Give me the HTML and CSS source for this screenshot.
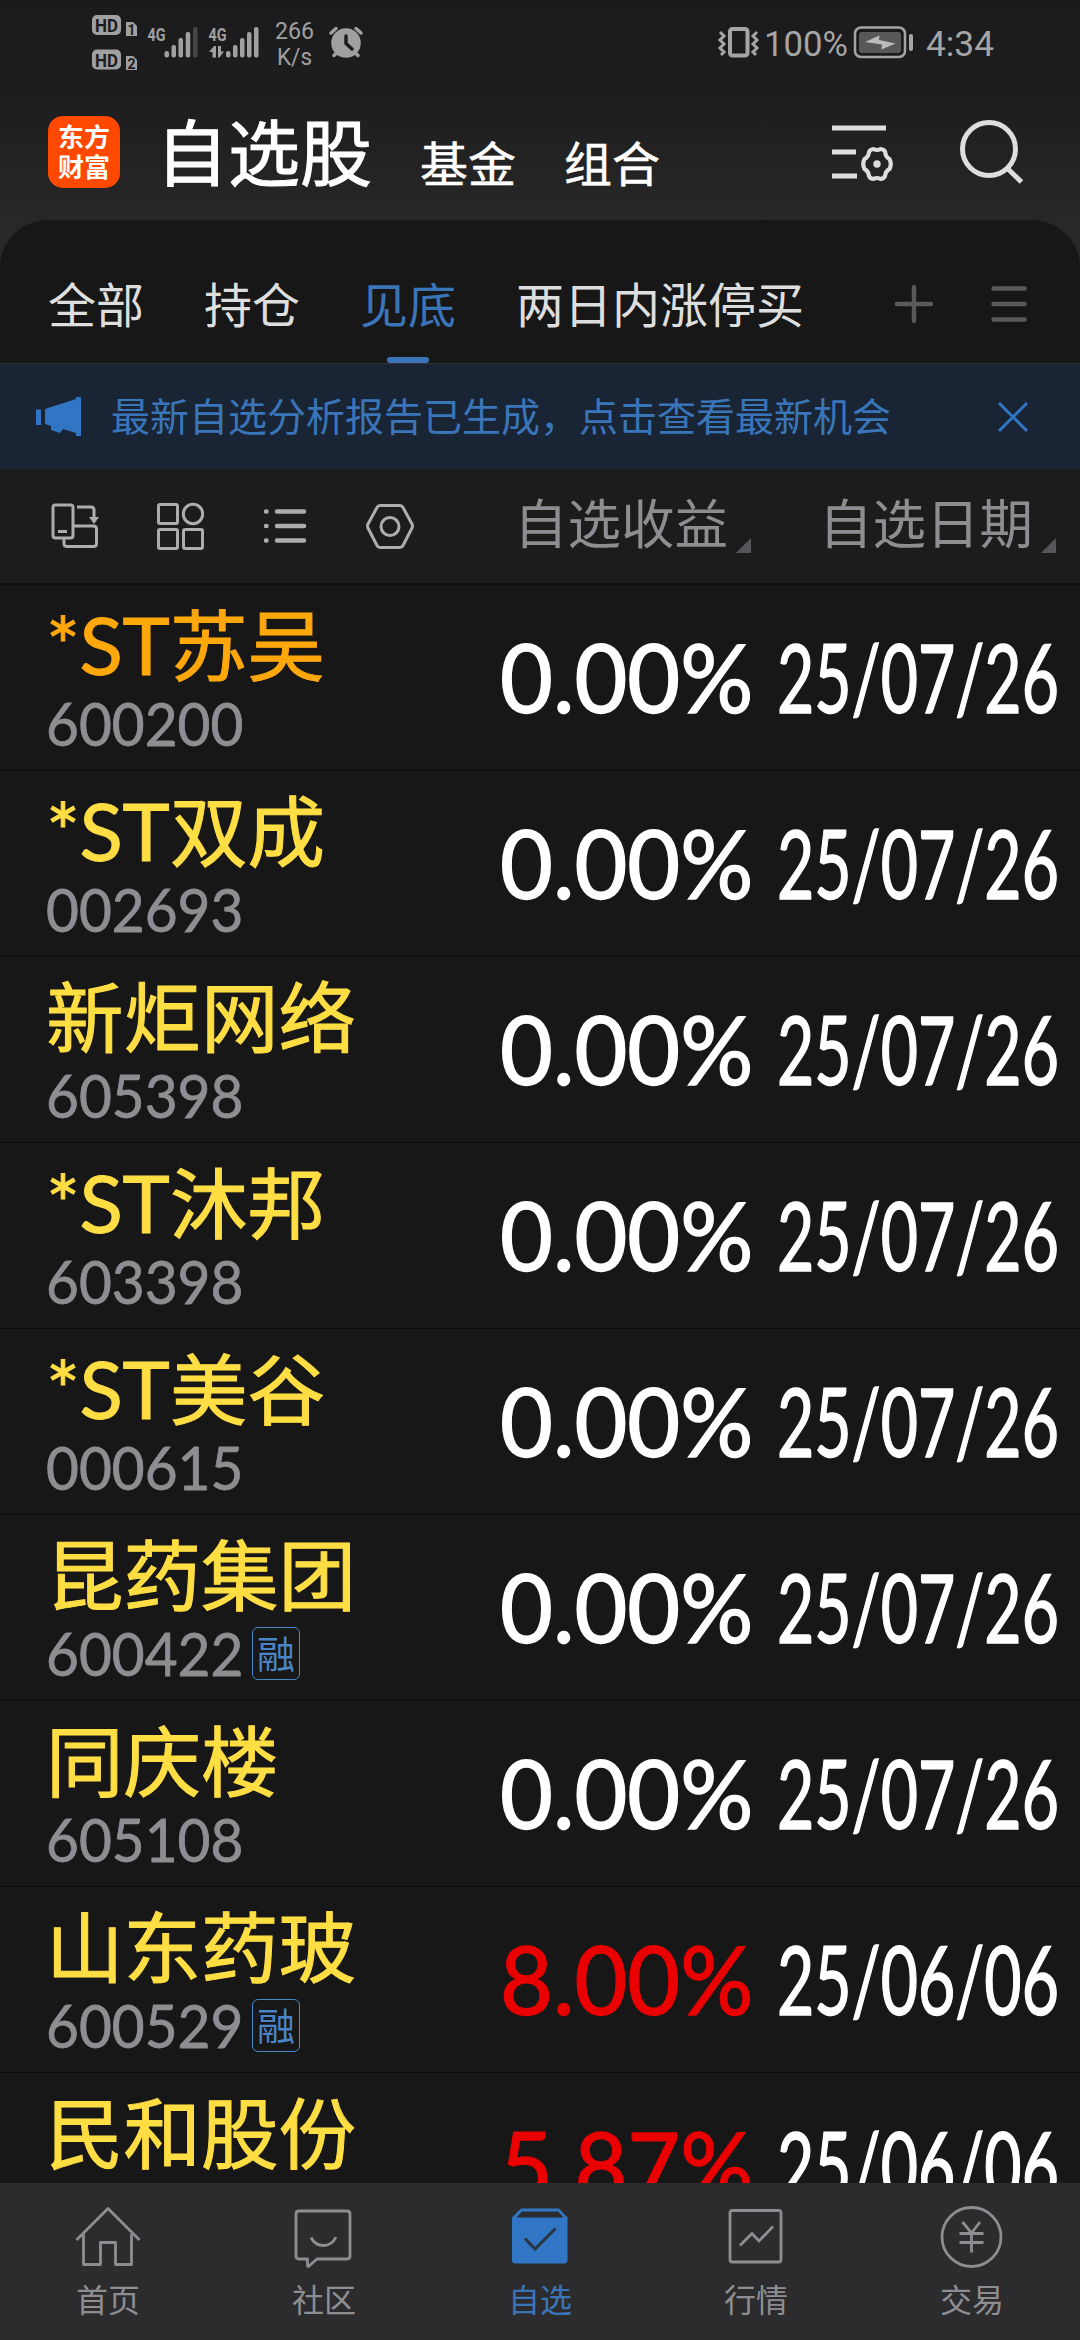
FILE: index.html
```
<!DOCTYPE html>
<html lang="zh-CN">

<head>
    <meta charset="UTF-8">
    <meta name="viewport" content="width=device-width, initial-scale=1.0">
    <title>自选股</title>
    <link rel="stylesheet" href="styles.css">
</head>

<body>
    <div class="page">
        <!-- 状态栏 -->
        <div class="status">
            <svg class="status-left" width="290" height="84" viewBox="80 0 290 84">
                <g fill="#a0a0a0">
                    <rect x="92" y="15" width="29" height="20" rx="5" />
                    <rect x="92" y="49.500" width="29" height="20" rx="5" />
                    <path d="M126 36V22h7l4 4v10z" />
                    <path d="M126 70V56h7l4 4v10z" />
                    <rect x="164.500" y="51" width="4.500" height="6.500" rx="2" />
                    <rect x="171.500" y="45" width="4.500" height="12.500" rx="2" />
                    <rect x="178.500" y="38" width="4.500" height="19.500" rx="2" />
                    <rect x="185.700" y="32" width="4.500" height="25.500" rx="2" />
                    <rect x="193" y="27" width="4.500" height="30.500" rx="2" fill="#464648" />
                    <rect x="226" y="51" width="4.500" height="6.500" rx="2" />
                    <rect x="233" y="45" width="4.500" height="12.500" rx="2" />
                    <rect x="240" y="38" width="4.500" height="19.500" rx="2" />
                    <rect x="247" y="32" width="4.500" height="25.500" rx="2" />
                    <rect x="254" y="27" width="4.500" height="30.500" rx="2" />
                    <path d="M212.500 57.500V52H209l5-6h2v11.500zM218 46h3v5.500h3L219.500 57.500H218z" />
                    <circle cx="346" cy="43" r="14.800" />
                </g>
                <g stroke="#a0a0a0" stroke-width="3.500" stroke-linecap="round" fill="none">
                    <path d="M331 33l5-4.500M361 33l-5-4.500M334 55.500l4-4M358 55.500l-4-4" />
                </g>
                <path d="M346 36v7.500l6 5.500" stroke="#1c1c1e" stroke-width="3.500" stroke-linecap="round" fill="none" />
                <g class="hd">
                    <text x="95" y="32" textLength="23" lengthAdjust="spacingAndGlyphs">HD</text>
                    <text x="95" y="66.500" textLength="23" lengthAdjust="spacingAndGlyphs">HD</text>
                    <text class="sim" x="127.500" y="35">1</text>
                    <text class="sim" x="127.500" y="69">2</text>
                </g>
                <g class="net">
                    <text class="g4" x="147.500" y="41" textLength="18" lengthAdjust="spacingAndGlyphs">4G</text>
                    <text class="g4" x="208.500" y="41" textLength="18" lengthAdjust="spacingAndGlyphs">4G</text>
                    <text x="275" y="38.500" textLength="39" lengthAdjust="spacingAndGlyphs">266</text>
                    <text x="277" y="65" textLength="35" lengthAdjust="spacingAndGlyphs">K/s</text>
                </g>
            </svg>
            <svg class="status-right" width="290" height="84" viewBox="710 0 290 84">
                <g fill="none" stroke="#a5a5a5">
                    <rect x="730" y="29" width="17.500" height="26.500" rx="2.500" stroke-width="4" />
                    <path d="M720 32l4 4-4 4 4 4-4 4 4 4-3 3M757 32l-4 4 4 4-4 4 4 4-4 4 3 3" stroke-width="3" />
                    <rect x="855" y="27.500" width="50" height="29.500" rx="6" stroke-width="2.500" />
                </g>
                <rect x="859" y="32" width="42" height="21" rx="3" fill="#58585a" />
                <path d="M865 42l14.500-6.500-.5 4.500 16.500 3.500-14 6 .5-5z" fill="#bcbcbc" />
                <rect x="909" y="34" width="4" height="17" rx="2" fill="#a5a5a5" />
                <g class="clock">
                    <text x="764" y="56" textLength="84" lengthAdjust="spacingAndGlyphs">100%</text>
                    <text x="926" y="56" textLength="68" lengthAdjust="spacingAndGlyphs">4:34</text>
                </g>
            </svg>
        </div>

        <!-- 顶部标题 -->
        <div class="header">
            <div class="logo"><span>东方</span><span>财富</span></div>
            <div class="title">自选股</div>
            <div class="sub">基金</div>
            <div class="sub">组合</div>
            <svg class="icon-set" width="68" height="66" viewBox="0 0 68 66" fill="none" stroke="#dedede">
                <path d="M3 12h54M3 36h24M3 60h25" stroke-width="5" />
                <path d="M44.500 33q3.500 2 7 0 5 .5 5 5 .5 3 4 5 2.500 5 0 10-3.500 2-4 5-.5 4.500-5 5-3.500-2-7 0-4.500-.5-5-5-.5-3-4-5-2.500-5 0-10 3.500-2 4-5 .5-4.500 5-5z" stroke-width="4.200" stroke-linejoin="round" />
                <circle cx="48" cy="48" r="3.700" fill="#dedede" stroke="none" />
            </svg>
            <svg class="icon-search" width="66" height="66" viewBox="0 0 66 66" fill="none" stroke="#dedede">
                <circle cx="31" cy="31" r="26.500" stroke-width="5" />
                <path d="M49 50l14.500 14" stroke-width="5" />
            </svg>
        </div>

        <!-- 分组 -->
        <div class="tabs">
            <span>全部</span>
            <span>持仓</span>
            <span class="on">见底</span>
            <span>两日内涨停买</span>
            <svg class="icon-add" width="40" height="40" viewBox="0 0 40 40" stroke="#5a5a5a" stroke-width="4.500" stroke-linecap="round">
                <path d="M3 20h34M20 3v34" />
            </svg>
            <svg class="icon-menu" width="36" height="36" viewBox="0 0 36 36" stroke="#5a5a5a" stroke-width="4.500" stroke-linecap="round">
                <path d="M2.500 2.500h31M2.500 18h31M2.500 33.500h31" />
            </svg>
        </div>

        <!-- 提示条 -->
        <div class="notice">
            <svg width="46" height="40" viewBox="0 0 46 40" fill="#3076c4">
                <path d="M0 12.500h5V28H0zM9 12l31-10V0h5v39h-5v-3l-13-4-3 4-9-3v-4l-6-2z" />
            </svg>
            <p>最新自选分析报告已生成，点击查看最新机会</p>
            <svg class="close" width="32" height="32" viewBox="0 0 32 32" stroke="#3076c4" stroke-width="3">
                <path d="M2 2l28 28M30 2L2 30" />
            </svg>
        </div>

        <!-- 表头 -->
        <div class="thead">
            <div class="tools">
                <svg width="48" height="48" viewBox="0 0 48 48" fill="none" stroke="#adadad" stroke-width="3">
                    <rect x="2" y="3" width="20" height="33" rx="2.500" />
                    <path d="M22 24h20.500q3 0 3 3v14.500q0 3-3 3H16q-3 0-3-3V36" />
                    <path d="M26 5h14q3 0 3 3v9M7 29.500h9" />
                    <path d="M38 15h10l-5 7z" fill="#adadad" stroke="none" />
                </svg>
                <svg width="48" height="48" viewBox="0 0 48 48" fill="none" stroke="#adadad" stroke-width="3">
                    <rect x="2.500" y="2.500" width="19" height="19" rx="1.500" />
                    <circle cx="37" cy="12" r="9.700" />
                    <rect x="2.500" y="27.500" width="19" height="19" rx="1.500" />
                    <rect x="27.500" y="27.500" width="19" height="19" rx="1.500" />
                </svg>
                <svg width="48" height="48" viewBox="0 0 48 48" fill="none" stroke="#adadad" stroke-width="4.500" stroke-linecap="round">
                    <path d="M16 9.500h27M16 24h27M16 38.500h27M5 9.500h.5M5 24h.5M5 38.500h.5" />
                </svg>
                <svg width="48" height="48" viewBox="0 0 48 48" fill="none" stroke="#adadad" stroke-width="3" stroke-linejoin="round">
                    <path d="M14 3.500h20q2 0 3 2L46 22q1 2 0 4l-9 17.500q-1 2-3 2H14q-2 0-3-2L2 26q-1-2 0-4L11 5.500q1-2 3-2z" />
                    <circle cx="24" cy="24.500" r="9" />
                </svg>
            </div>
            <div class="th">自选收益<i></i></div>
            <div class="th">自选日期<i></i></div>
        </div>

        <!-- 列表 -->
        <div class="list">
            <div class="row">
                <div class="stock">
                    <div class="name orange"><b>*ST</b>苏吴</div>
                    <div class="code"><span>600200</span></div>
                </div>
                <div class="rate"><span>0.00%</span></div>
                <div class="date"><span>25/07/26</span></div>
            </div>
            <div class="row">
                <div class="stock">
                    <div class="name"><b>*ST</b>双成</div>
                    <div class="code"><span>002693</span></div>
                </div>
                <div class="rate"><span>0.00%</span></div>
                <div class="date"><span>25/07/26</span></div>
            </div>
            <div class="row">
                <div class="stock">
                    <div class="name">新炬网络</div>
                    <div class="code"><span>605398</span></div>
                </div>
                <div class="rate"><span>0.00%</span></div>
                <div class="date"><span>25/07/26</span></div>
            </div>
            <div class="row">
                <div class="stock">
                    <div class="name"><b>*ST</b>沐邦</div>
                    <div class="code"><span>603398</span></div>
                </div>
                <div class="rate"><span>0.00%</span></div>
                <div class="date"><span>25/07/26</span></div>
            </div>
            <div class="row">
                <div class="stock">
                    <div class="name"><b>*ST</b>美谷</div>
                    <div class="code"><span>000615</span></div>
                </div>
                <div class="rate"><span>0.00%</span></div>
                <div class="date"><span>25/07/26</span></div>
            </div>
            <div class="row">
                <div class="stock">
                    <div class="name">昆药集团</div>
                    <div class="code"><span>600422</span><em>融</em></div>
                </div>
                <div class="rate"><span>0.00%</span></div>
                <div class="date"><span>25/07/26</span></div>
            </div>
            <div class="row">
                <div class="stock">
                    <div class="name">同庆楼</div>
                    <div class="code"><span>605108</span></div>
                </div>
                <div class="rate"><span>0.00%</span></div>
                <div class="date"><span>25/07/26</span></div>
            </div>
            <div class="row">
                <div class="stock">
                    <div class="name">山东药玻</div>
                    <div class="code"><span>600529</span><em>融</em></div>
                </div>
                <div class="rate red"><span>8.00%</span></div>
                <div class="date"><span>25/06/06</span></div>
            </div>
            <div class="row">
                <div class="stock">
                    <div class="name">民和股份</div>
                </div>
                <div class="rate red"><span>5.87%</span></div>
                <div class="date"><span>25/06/06</span></div>
            </div>
        </div>

        <!-- 底部导航 -->
        <div class="nav">
            <div class="nav-item">
                <svg width="68" height="68" viewBox="0 0 68 68" fill="none" stroke="#8e8e92" stroke-width="2.800">
                    <path d="M2.500 37L34 5.500 65.500 37M9.500 31v30.500h17V39.500h15v22h16V31" stroke-linejoin="round" />
                </svg>
                <span>首页</span>
            </div>
            <div class="nav-item">
                <svg width="68" height="68" viewBox="0 0 68 68" fill="none" stroke="#8e8e92" stroke-width="2.800" stroke-linejoin="round">
                    <path d="M9 8h48q3 0 3 3v42q0 3-3 3H27l-8.500 7.500q-1 0-1-1V56H9q-3 0-3-3V11q0-3 3-3z" />
                    <path d="M21 34.500q4 8 12.500 8T46 34" />
                </svg>
                <span>社区</span>
            </div>
            <div class="nav-item active">
                <svg width="68" height="68" viewBox="0 0 68 68">
                    <path d="M15 5.500h38l8.500 9V57q0 3.500-3.500 3.500H9.500Q6 60.500 6 57V14.500z" fill="#3076c4" />
                    <path d="M16 8.500h36l5.500 6h-47z" fill="#2c2c2e" />
                    <path d="M19 35.500l10 10.500 20.500-20.500" fill="none" stroke="#2a3442" stroke-width="3" />
                </svg>
                <span>自选</span>
            </div>
            <div class="nav-item">
                <svg width="68" height="68" viewBox="0 0 68 68" fill="none" stroke="#8e8e92" stroke-width="2.800">
                    <rect x="8" y="7.500" width="51" height="51.500" rx="2.500" />
                    <path d="M18 42.500l12-12 7 7.500 14-14.500" />
                </svg>
                <span>行情</span>
            </div>
            <div class="nav-item">
                <svg width="68" height="68" viewBox="0 0 68 68" fill="none" stroke="#8e8e92" stroke-width="2.800">
                    <circle cx="33.500" cy="34" r="29.500" />
                    <path d="M24.500 19l9 11 8.500-11M21.500 30.500h24M21.500 39.500h24M33.500 30v19.500" />
                </svg>
                <span>交易</span>
            </div>
        </div>
    </div>
</body>

</html>
```
FILE: styles.css
```
* {
    box-sizing: border-box;
    margin: 0;
    padding: 0;
}

body {
    width: 1080px;
    background: #171717;
    font-family: "Noto Sans CJK SC", sans-serif;
}

svg {
    display: block;
    flex: none;
}

.page {
    display: flex;
    flex-direction: column;
    width: 1080px;
    height: 2340px;
    overflow: hidden;
    background: linear-gradient(#1b1b1d 0, #1d1d1f 90px, #282828 230px, #282828 280px, #171717 280px);
}

/* 状态栏 */
.status {
    display: flex;
    justify-content: space-between;
    height: 84px;
    padding: 0 80px;
}

.hd {
    font: bold 19px Roboto, sans-serif;
    fill: #1c1c1e;
}

.hd .sim {
    font-size: 14px;
}

.net {
    font: 23px Roboto, sans-serif;
    fill: #a0a0a0;
}

.net .g4 {
    font-weight: bold;
    font-size: 19px;
}

.clock {
    font: 35px Roboto, sans-serif;
    fill: #a5a5a5;
}

/* 标题 */
.header {
    display: flex;
    height: 136px;
    padding-left: 48px;
    color: #fff;
    white-space: nowrap;
}

.logo {
    display: flex;
    flex-direction: column;
    align-items: center;
    justify-content: center;
    width: 72px;
    height: 72px;
    margin-top: 32px;
    padding-bottom: 3px;
    border-radius: 15px;
    background: #ff4800;
    font-size: 26px;
    font-weight: bold;
    line-height: 30px;
}

.title {
    width: 261px;
    padding-left: 36px;
    font-size: 72px;
    line-height: 130px;
    -webkit-text-stroke: 1px #fff;
}

.sub {
    width: 144px;
    padding-left: 39px;
    font-size: 48px;
    line-height: 155px;
    -webkit-text-stroke: .5px #fff;
}

.icon-set {
    margin: 32px 0 0 160px;
}

.icon-search {
    margin: 34px 0 0 61px;
}

/* 分组 */
.tabs {
    display: flex;
    align-items: center;
    height: 143px;
    padding: 0 53px 0 48px;
    border-radius: 48px 48px 0 0;
    background: #171717;
    color: #dedede;
    font-size: 48px;
    line-height: 117px;
    white-space: nowrap;
}

.tabs span {
    margin-right: 60px;
    padding: 24px 0 2px;
}

.tabs .on {
    position: relative;
    color: #3a75ba;
}

.tabs .on::after {
    content: "";
    position: absolute;
    left: 27px;
    bottom: 0;
    width: 42px;
    height: 6px;
    border-radius: 3px;
    background: #3a75ba;
}

.icon-add {
    margin: 24px 57px 0 auto;
}

.icon-menu {
    margin-top: 24px;
}

/* 提示条 */
.notice {
    display: flex;
    align-items: center;
    height: 106px;
    padding: 0 51px 0 36px;
    border-top: 1px solid #303234;
    background: #192534;
    color: #3a75ba;
    font-size: 39px;
}

.notice p {
    margin: 0 0 5px 29px;
    white-space: nowrap;
}

.close {
    margin-left: auto;
}

/* 表头 */
.thead {
    display: flex;
    align-items: center;
    height: 116px;
    border-bottom: 2px solid #0e0e0e;
    background: #1c1c1c;
}

.tools {
    display: flex;
    flex: none;
    gap: 57px;
    width: 514px;
    padding-left: 51px;
}

.th {
    display: flex;
    flex: none;
    width: 305px;
    height: 86px;
    color: #8e8e92;
    font-size: 53.500px;
    line-height: 76px;
    white-space: nowrap;
}

.th:last-child {
    width: 240px;
}

.th i {
    align-self: flex-end;
    margin: 0 0 16px 8px;
    border-left: 15px solid transparent;
    border-bottom: 15px solid #56565a;
}

/* 列表 */
.list {
    flex: 1;
    overflow: hidden;
    background: #171717;
}

.row {
    display: grid;
    grid-template-columns: 500px 277px 1fr;
    height: 186px;
    border-bottom: 1px solid #0c0c0c;
}

.stock {
    padding-left: 46px;
}

.name {
    height: 112px;
    color: #ffde44;
    font-size: 77.500px;
    line-height: 112px;
    white-space: nowrap;
    -webkit-text-stroke: 1px;
}

.name b {
    display: inline-block;
    width: 124px;
    font-weight: normal;
    font-family: Lato, sans-serif;
    font-size: 80px;
    line-height: 80px;
    letter-spacing: -.5px;
}

.orange {
    color: #ffa80c;
}

.code {
    display: flex;
    height: 54px;
    color: #8e8e92;
    font-family: Lato, sans-serif;
    font-size: 60px;
    line-height: 52px;
    -webkit-text-stroke: .8px;
}

.code span {
    width: 206px;
    transform: scaleX(.945);
    transform-origin: 0 0;
}

.code em {
    width: 48px;
    height: 53px;
    border: 1px solid #4a85c8;
    border-radius: 6px;
    color: #4a85c8;
    font: 38px/47px "Noto Sans CJK SC", sans-serif;
    text-align: center;
    -webkit-text-stroke: 0;
}

.rate,
.date {
    color: #fff;
    font-family: Lato, sans-serif;
    font-size: 95px;
    line-height: 183px;
    white-space: nowrap;
    -webkit-text-stroke: 1.500px;
}

.rate span,
.date span {
    display: inline-block;
    transform: scaleX(.96);
    transform-origin: 0 0;
}

.date span {
    transform: scaleX(.677);
}

.red {
    color: #ea0000;
}

/* 底部导航 */
.nav {
    display: flex;
    height: 157px;
    background: #2c2c2e;
}

.nav-item {
    display: flex;
    flex: 1;
    flex-direction: column;
    align-items: center;
    padding-top: 20px;
    color: #8e8e92;
    font-size: 32px;
    line-height: 55px;
}

.active {
    color: #3a75ba;
}
```
